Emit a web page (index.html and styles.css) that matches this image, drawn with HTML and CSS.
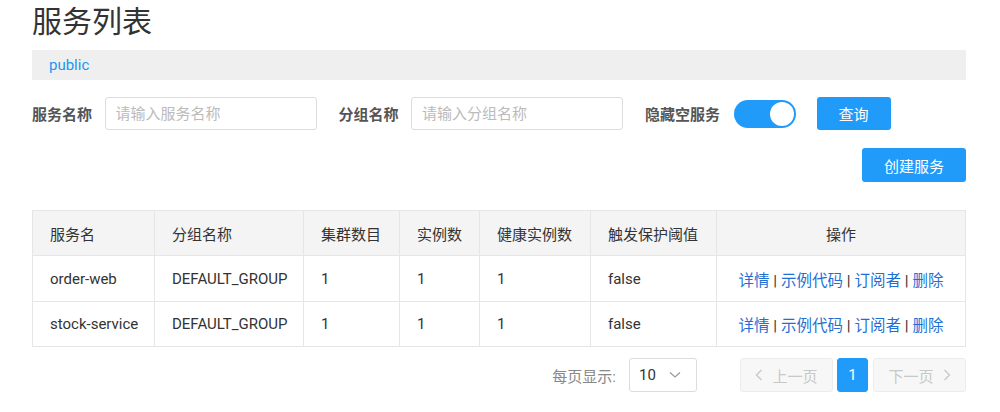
FILE: index.html
```html
<!DOCTYPE html>
<html lang="zh-CN">
<head>
<meta charset="utf-8">
<title>服务列表</title>
<link rel="stylesheet" href="styles.css">
</head>
<body>
<div class="page">
  <h1 class="title">服务列表</h1>
  <div class="ns-bar"><span class="ns">public</span></div>

  <div class="filters">
    <label class="flabel">服务名称</label>
    <input class="finput" placeholder="请输入服务名称">
    <label class="flabel gap">分组名称</label>
    <input class="finput" placeholder="请输入分组名称">
    <label class="flabel gap">隐藏空服务</label>
    <span class="switch"><span class="knob"></span></span>
    <button class="btn query">查询</button>
  </div>

  <div class="create-row">
    <button class="btn create">创建服务</button>
  </div>

  <table class="grid">
    <colgroup>
      <col style="width:122px"><col style="width:149px"><col style="width:96px"><col style="width:80px"><col style="width:111px"><col style="width:126px"><col>
    </colgroup>
    <thead>
      <tr><th>服务名</th><th>分组名称</th><th>集群数目</th><th>实例数</th><th>健康实例数</th><th>触发保护阈值</th><th class="center">操作</th></tr>
    </thead>
    <tbody>
      <tr class="r1"><td>order-web</td><td>DEFAULT_GROUP</td><td>1</td><td>1</td><td>1</td><td>false</td>
        <td class="center ops"><a>详情</a> | <a>示例代码</a> | <a>订阅者</a> | <a>删除</a></td></tr>
      <tr><td>stock-service</td><td>DEFAULT_GROUP</td><td>1</td><td>1</td><td>1</td><td>false</td>
        <td class="center ops"><a>详情</a> | <a>示例代码</a> | <a>订阅者</a> | <a>删除</a></td></tr>
    </tbody>
  </table>

  <div class="pager">
    <span class="per">每页显示:</span>
    <span class="select">10
      <svg class="caret" width="12" height="8" viewBox="0 0 12 8"><path d="M1 1.5 L6 6 L11 1.5" fill="none" stroke="#999" stroke-width="1.2"/></svg>
    </span>
    <span class="pbtn prev"><svg width="8" height="12" viewBox="0 0 8 12"><path d="M6.5 1 L1.5 6 L6.5 11" fill="none" stroke="#c8c8c8" stroke-width="1.3"/></svg>上一页</span>
    <span class="pbtn cur">1</span>
    <span class="pbtn next">下一页<svg width="8" height="12" viewBox="0 0 8 12"><path d="M1.5 1 L6.5 6 L1.5 11" fill="none" stroke="#c8c8c8" stroke-width="1.3"/></svg></span>
  </div>
</div>
</body>
</html>
```
FILE: styles.css
```css
html, body { margin: 0; padding: 0; background: #fff; }
body {
  font-family: Roboto, "Noto Sans CJK SC", sans-serif;
  font-size: 15px;
  color: #333;
}
.page { width: 934px; padding-left: 32px; }
.title {
  margin: 0;
  font-size: 30px;
  font-weight: 400;
  line-height: 44px;
  height: 50px;
  color: #333;
}
.ns-bar {
  height: 30px;
  background: #efefef;
  display: flex;
  align-items: center;
  padding-left: 17px;
}
.ns { color: #2196f3; font-size: 15px; }

.filters {
  display: flex;
  align-items: center;
  margin-top: 17px;
  height: 33px;
}
.flabel {
  font-weight: 700;
  color: #555;
  font-size: 15px;
  margin-right: 12.5px;
}
.flabel.gap { margin-left: 22px; }
.finput {
  box-sizing: border-box;
  width: 212px;
  height: 33px;
  border: 1px solid #dcdcdc;
  border-radius: 3px;
  padding: 0 10px;
  font-family: inherit;
  font-size: 15px;
  color: #333;
  outline: none;
}
.finput::placeholder { color: #bbb; }
.switch {
  box-sizing: border-box;
  width: 62px;
  height: 28px;
  border-radius: 14px;
  background: #209bfa;
  margin-left: 1px;
  display: flex;
  align-items: center;
  justify-content: flex-end;
  padding-right: 2px;
}
.knob {
  width: 24px; height: 24px;
  border-radius: 50%;
  background: #fff;
}
.btn {
  box-sizing: border-box;
  border: none;
  background: #209bfa;
  color: #fff;
  font-family: inherit;
  font-size: 15px;
  border-radius: 3px;
  padding: 0;
}
.query { width: 74px; height: 33px; margin-left: 21px; }
.create-row {
  display: flex;
  justify-content: flex-end;
  margin-top: 18px;
}
.create { width: 104px; height: 34px; }

.grid {
  margin-top: 28px;
  width: 934px;
  border-collapse: collapse;
  table-layout: fixed;
  font-size: 15px;
}
.grid th, .grid td {
  border: 1px solid #e6e6e6;
  text-align: left;
  padding: 0 0 0 17px;
  font-weight: 400;
  color: #333;
  white-space: nowrap;
}
.grid th { background: #f4f4f4; height: 44px; }
.grid td { height: 44px; }
.grid .r1 td { height: 45px; }
.grid .center { text-align: center; padding: 0; }
.ops { color: #555; font-size: 15.5px; }
.ops a { color: #1f6fd4; cursor: pointer; }

.pager {
  display: flex;
  align-items: center;
  justify-content: flex-end;
  margin-top: 11px;
  height: 34px;
}
.per { color: #888; font-size: 15px; margin-right: 13px; }
.select {
  box-sizing: border-box;
  width: 68px;
  height: 34px;
  border: 1px solid #dcdcdc;
  border-radius: 3px;
  display: flex;
  align-items: center;
  justify-content: space-between;
  padding: 0 15px 0 9px;
  color: #333;
  margin-right: 43px;
}
.pbtn {
  box-sizing: border-box;
  height: 34px;
  border: 1px solid #ececec;
  background: #f7f7f7;
  border-radius: 3px;
  display: flex;
  align-items: center;
  justify-content: center;
  color: #c8c8c8;
  gap: 9px;
}
.prev { width: 93px; }
.next { width: 93px; }
.cur {
  width: 31px;
  margin: 0 5px 0 4px;
  background: #209bfa;
  border-color: #209bfa;
  color: #fff;
}
```
